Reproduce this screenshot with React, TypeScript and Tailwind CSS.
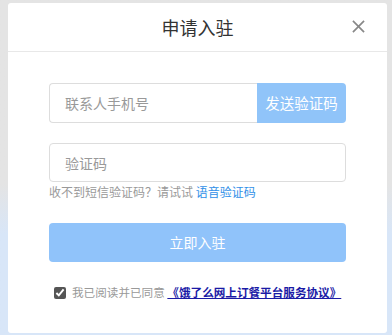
export default function App() {
  return (
    <div
      className="w-[392px] h-[335px] overflow-hidden bg-gradient-to-b from-[#e4e4e4] from-55% to-[#d8e6f8] to-70% pt-[3px] pl-[8px]"
      style={{ fontFamily: '"Noto Sans CJK SC", "Microsoft YaHei", sans-serif' }}
    >
      <div className="w-[379px] h-[330px] bg-white rounded-[3px]">
        {/* Header */}
        <div className="relative h-[49px] border-b border-[#e8e8e8] flex items-center justify-center">
          <h2 className="text-[18px] text-[#333] leading-none">申请入驻</h2>
          <button className="absolute right-[22px] top-[17px]">
            <svg width="13" height="13" viewBox="0 0 14 14">
              <path d="M1 1 L13 13 M13 1 L1 13" stroke="#888" strokeWidth="1.8" />
            </svg>
          </button>
        </div>

        {/* Body */}
        <div className="pl-[41px] pr-[41px] pt-[31px]">
          <div className="flex h-[40px]">
            <input
              className="flex-1 min-w-0 border border-[#ddd] border-r-0 rounded-l-[4px] px-[15px] text-[14px] text-[#333] placeholder:text-[#999] outline-none"
              placeholder="联系人手机号"
            />
            <button className="w-[89px] bg-[#90c4f9] text-white text-[14.5px] rounded-r-[4px] whitespace-nowrap">发送验证码</button>
          </div>

          <input
            className="mt-[20px] w-full h-[39px] border border-[#ddd] rounded-[4px] px-[15px] text-[14px] text-[#333] placeholder:text-[#999] outline-none"
            placeholder="验证码"
          />
          <p className="mt-[2px] text-[12px] leading-[16px] text-[#999] whitespace-nowrap">
            收不到短信验证码？请试试 <a className="text-[#3190e8]">语音验证码</a>
          </p>

          <button className="mt-[23px] w-full h-[39px] bg-[#90c3fa] text-white text-[14px] rounded-[4px]">立即入驻</button>

          <label className="mt-[22px] ml-[5px] flex items-center gap-[6px] text-[11.6px] text-[#999] whitespace-nowrap">
            <input type="checkbox" defaultChecked className="w-[12px] h-[12px] accent-[#555]" />
            <span>
              我已阅读并已同意 <a className="text-[#1a1aa6] underline font-bold">《饿了么网上订餐平台服务协议》</a>
            </span>
          </label>
        </div>
      </div>
    </div>
  );
}
